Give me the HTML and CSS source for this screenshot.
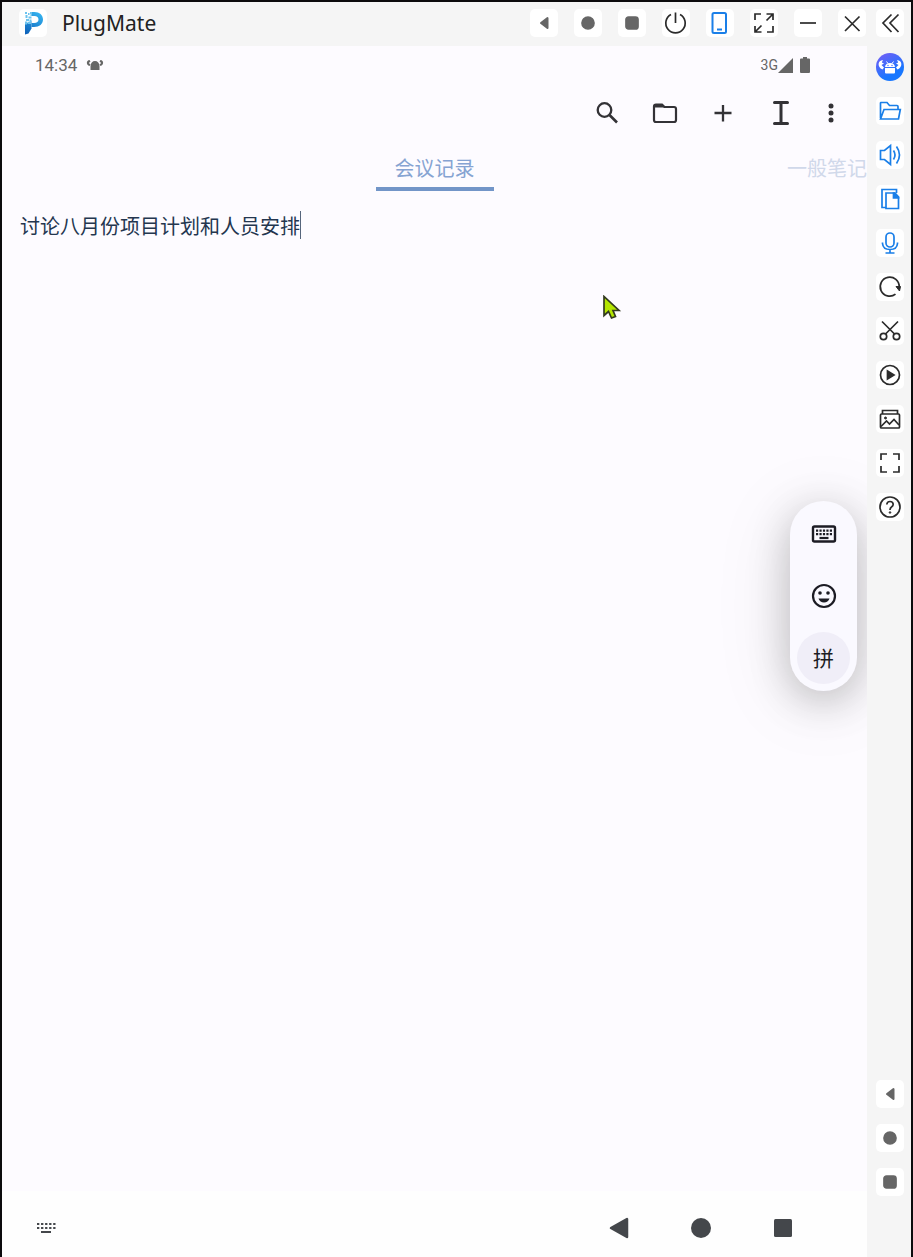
FILE: index.html
```html
<!DOCTYPE html>
<html lang="zh-CN">
<head>
    <meta charset="UTF-8">
    <meta name="viewport" content="width=device-width, initial-scale=1.0">
    <title>PlugMate</title>
    <link rel="stylesheet" href="styles.css">
</head>
<body>

    <!-- Shapes used more than once -->
    <svg class="sprites" aria-hidden="true">
        <symbol id="back" viewBox="0 0 28 28"><path d="M11 14L17.500 9V19Z" fill="currentColor" stroke="currentColor" stroke-width="2" stroke-linejoin="round"/></symbol>
        <symbol id="home" viewBox="0 0 28 28"><circle cx="14" cy="14" r="6" fill="currentColor"/></symbol>
        <symbol id="recent" viewBox="0 0 28 28"><rect x="8" y="8" width="12" height="12" rx="2.5" fill="currentColor"/></symbol>
    </svg>

    <div class="window">
        <header class="titlebar">
            <svg class="logo" viewBox="0 0 28 28" aria-hidden="true">
                <defs>
                    <linearGradient id="logo-fill" gradientUnits="userSpaceOnUse" x1="20" y1="3" x2="6" y2="25">
                        <stop offset="0" stop-color="#35b4f0"/>
                        <stop offset="1" stop-color="#0c5fb8"/>
                    </linearGradient>
                </defs>
                <rect width="28" height="28" rx="5" fill="#fff"/>
                <path d="M6 15L12.500 12V19.500L9.500 24.500L6 25.500Z" fill="url(#logo-fill)"/>
                <path d="M13 3H15.500C20.500 3 24 6 24 10.500C24 15 20.500 18 15 18H12.500V14H15C18 14 19.500 12.800 19.500 10.500C19.500 8.200 18 7 15.500 7H13Z" fill="url(#logo-fill)"/>
                <path d="M6 3H8V5H6ZM9 4H10.500V6H9ZM11 3H13V7H11.500V5H11ZM6.500 6H8.500V9H6.500ZM9.500 7.500H12.500V9.500H9.500ZM7 10H10V12H7ZM10.500 10.500H12.500V12.500H10.500ZM6 12.500H8V15.500H6ZM8.500 12.800H12V15H8.500Z" fill="#6cc3ee"/>
            </svg>
            <h1 class="app-name">PlugMate</h1>
            <div class="window-actions">
                <button class="tile nav-key" type="button" aria-label="Back"><svg><use href="#back"/></svg></button>
                <button class="tile nav-key" type="button" aria-label="Home"><svg><use href="#home"/></svg></button>
                <button class="tile nav-key" type="button" aria-label="Recent apps"><svg><use href="#recent"/></svg></button>
                <button class="tile" type="button" aria-label="Power">
                    <svg viewBox="0 0 28 28"><path d="M9 5.500A9.700 9.700 0 1 0 18 5.500M13.500 3.500V14"/></svg>
                </button>
                <button class="tile blue" type="button" aria-label="Phone mode">
                    <svg viewBox="0 0 28 28"><rect x="6.500" y="4" width="13.500" height="20" rx="1.500" stroke-width="2"/><path d="M11 20.500H16" stroke-width="2"/></svg>
                </button>
                <button class="tile" type="button" aria-label="Full screen">
                    <svg viewBox="0 0 28 28"><path d="M5 11V5H11M16.500 5H23V11M23 5L16.500 11.500M23 17V23H17M11.500 23H5V17M5 23L11.500 16.500"/></svg>
                </button>
                <button class="tile" type="button" aria-label="Minimize">
                    <svg viewBox="0 0 28 28"><path d="M6 14H22"/></svg>
                </button>
                <button class="tile" type="button" aria-label="Close">
                    <svg viewBox="0 0 28 28"><path d="M7 7.500L21.500 22M21.500 7.500L7 22"/></svg>
                </button>
            </div>
            <button class="tile" type="button" aria-label="Collapse sidebar">
                <svg viewBox="0 0 28 28"><path d="M15.500 5.500L7 14L15.500 23M22.500 5.500L14 14L22.500 23"/></svg>
            </button>
        </header>

        <main class="screen">
            <div class="status">
                <span class="clock">14:34</span>
                <svg class="crab" viewBox="0 0 18 12" aria-hidden="true">
                    <path d="M4.500 7C4.500 4 6.500 2 9 2S13.500 4 13.500 7V11H4.500Z"/>
                    <path d="M3.500 1C0 1.500 0 6 3.500 7L4.500 5.500L2.800 4L4.500 2.500ZM14.500 1C18 1.500 18 6 14.500 7L13.500 5.500L15.200 4L13.500 2.500Z"/>
                </svg>
                <span class="network">3G</span>
                <svg class="signal" viewBox="0 0 15 15" aria-hidden="true"><path d="M15 0V15H0Z"/></svg>
                <svg class="battery" viewBox="0 0 10 16" aria-hidden="true"><path d="M3 0H7V1.500H9Q10 1.500 10 2.500V15Q10 16 9 16H1Q0 16 0 15V2.500Q0 1.500 1 1.500H3Z"/></svg>
            </div>

            <div class="toolbar">
                <button type="button" aria-label="Search">
                    <svg viewBox="0 0 28 28"><circle cx="11.500" cy="11" r="6.800" stroke-width="2.300"/><path d="M16.500 16L24 23.500" stroke-width="2.600"/></svg>
                </button>
                <button type="button" aria-label="Folders">
                    <svg viewBox="0 0 28 28"><path d="M3 7.500Q3 5.500 5 5.500H11L13.500 8H23Q25 8 25 10V21Q25 23 23 23H5Q3 23 3 21Z" stroke-width="2.200"/><path d="M3 5H11.500L14 8.500H3Z" fill="currentColor" stroke="none"/></svg>
                </button>
                <button type="button" aria-label="Add note">
                    <svg viewBox="0 0 28 28"><path d="M14 6V22.500M5.500 14H22.500" stroke-width="2.300"/></svg>
                </button>
                <button type="button" aria-label="Text cursor">
                    <svg viewBox="0 0 28 28"><path d="M7.500 3.500H20.500M14 3.500V24.500M7.500 24.500H20.500" stroke-width="3" stroke-linecap="round"/></svg>
                </button>
                <button class="more" type="button" aria-label="More options">
                    <svg viewBox="0 0 28 28"><g fill="currentColor" stroke="none"><circle cx="14" cy="7" r="2.500"/><circle cx="14" cy="14" r="2.500"/><circle cx="14" cy="21" r="2.500"/></g></svg>
                </button>
            </div>

            <div class="tabs" role="tablist">
                <button class="tab active" type="button" role="tab" aria-selected="true">会议记录</button>
                <button class="tab next" type="button" role="tab" aria-selected="false">一般笔记</button>
            </div>

            <div class="editor">
                <textarea class="note" rows="1" cols="14" aria-label="会议记录" spellcheck="false">讨论八月份项目计划和人员安排</textarea>
                <span class="caret"></span>
            </div>

            <!-- Floating input method picker -->
            <div class="ime">
                <button type="button" aria-label="Keyboard">
                    <svg viewBox="0 0 28 28">
                        <rect x="3" y="6.500" width="22" height="15" rx="1.500" stroke-width="2.400"/>
                        <path d="M6 10.700H22M6 14.200H22" stroke-width="2.200" stroke-dasharray="2.200 1.250"/>
                        <path d="M9.500 18H18.500" stroke-width="2.200"/>
                    </svg>
                </button>
                <button type="button" aria-label="Emoji">
                    <svg viewBox="0 0 28 28">
                        <circle cx="14" cy="14" r="11" stroke-width="2.200"/>
                        <g fill="currentColor" stroke="none"><circle cx="10" cy="11" r="1.800"/><circle cx="18" cy="11" r="1.800"/><path d="M8.500 16.500H19.500Q18 20.500 14 20.500T8.500 16.500Z"/></g>
                    </svg>
                </button>
                <button class="selected" type="button">拼</button>
            </div>

            <svg class="pointer" viewBox="0 0 20 26" aria-hidden="true"><path d="M2 1.500V20.500L6.500 16.500L9.500 23L13.500 21.500L11 15.500H17Z"/></svg>

            <nav class="navbar">
                <button type="button" aria-label="Show keyboard">
                    <svg viewBox="0 0 28 28"><path d="M5 10H23.500M5 14H23.500" stroke-width="2.200" stroke-dasharray="2.300 1.750"/><path d="M9 18H19" stroke-width="2"/></svg>
                </button>
                <div class="nav-keys">
                    <button type="button" aria-label="Back"><svg viewBox="0 0 28 28"><path d="M6 14L22 5V23Z" fill="currentColor" stroke-width="2.500" stroke-linejoin="round"/></svg></button>
                    <button type="button" aria-label="Home"><svg viewBox="0 0 28 28"><circle cx="14" cy="14" r="10" fill="currentColor" stroke="none"/></svg></button>
                    <button type="button" aria-label="Recent apps"><svg viewBox="0 0 28 28"><rect x="5" y="5" width="18" height="18" rx="1.500" fill="currentColor" stroke="none"/></svg></button>
                </div>
            </nav>
        </main>

        <aside class="rail">
            <button class="tile avatar" type="button" aria-label="Assistant">
                <svg viewBox="0 0 28 28">
                    <g fill="#fff" stroke="none">
                        <path d="M9 14Q9.500 10 14 10T19 14ZM9 15H19V19.500Q19 20.500 18 20.500H10Q9 20.500 9 19.500Z"/>
                        <path d="M7 7C1.500 7.500 1 14 6.500 16.500L8 14.500L5.500 12L8 10.500L5.800 9.500ZM21 7C26.500 7.500 27 14 21.500 16.500L20 14.500L22.500 12L20 10.500L22.200 9.500Z"/>
                    </g>
                    <path d="M10.500 8.500L12 10.500M17.500 8.500L16 10.500" stroke="#fff" stroke-width="1"/>
                    <g fill="#4a6bff" stroke="none"><circle cx="12" cy="12.500" r=".7"/><circle cx="16" cy="12.500" r=".7"/></g>
                </svg>
            </button>
            <button class="tile blue" type="button" aria-label="Files">
                <svg viewBox="0 0 28 28"><path d="M4.500 21V6Q4.500 5.500 5 5.500H11L13.500 8.500H21Q22 8.500 22 9.500V12M4.500 22L8 12.500H24.300L22.500 22Z"/></svg>
            </button>
            <button class="tile blue" type="button" aria-label="Volume">
                <svg viewBox="0 0 28 28"><path d="M4.500 9.500H8.500L14.500 4.500V23.500L8.500 18.500H4.500ZM17.500 9.500Q20.500 14 17.500 18.500M20.500 5.500Q26.500 14 20.500 22.500"/></svg>
            </button>
            <button class="tile blue" type="button" aria-label="Copy">
                <svg viewBox="0 0 28 28"><path d="M9.500 22.500H6V4.500H20.500V8M10 8H18.500L22.500 12V23.500H10Z"/><path d="M17.500 8H19L22.500 12V13H17.500Z" fill="currentColor"/></svg>
            </button>
            <button class="tile blue" type="button" aria-label="Microphone">
                <svg viewBox="0 0 28 28"><rect x="10" y="4" width="8" height="14" rx="4"/><path d="M6.500 13.500V14.500Q7 20.500 14 20.500T21.500 14.500V13.500M14 20.500V24M9.500 24H18.500"/></svg>
            </button>
            <button class="tile" type="button" aria-label="Rotate">
                <svg viewBox="0 0 28 28"><path d="M19.500 21.200A9.500 9.500 0 1 1 23.200 14"/><path d="M20 13.500H24.500L23.500 18Z" fill="currentColor" stroke-width="1"/></svg>
            </button>
            <button class="tile" type="button" aria-label="Cut">
                <svg viewBox="0 0 28 28"><circle cx="7.500" cy="19.500" r="3.200"/><circle cx="20.500" cy="19.500" r="3.200"/><path d="M9.500 17L22 4.500M18.500 17L6 4.500"/></svg>
            </button>
            <button class="tile" type="button" aria-label="Record">
                <svg viewBox="0 0 28 28"><circle cx="14" cy="14" r="9.500"/><path d="M11.500 10L18 14L11.500 18Z" fill="currentColor"/></svg>
            </button>
            <button class="tile" type="button" aria-label="Gallery">
                <svg viewBox="0 0 28 28"><rect x="4.500" y="9" width="19" height="14" rx="1"/><path d="M6.500 9V5.500H21.500V9M5 21.500L10.500 16L13.500 19L18 14.500L23 20"/><circle cx="9.500" cy="13" r="1" fill="currentColor" stroke-width="1"/></svg>
            </button>
            <button class="tile" type="button" aria-label="Screenshot">
                <svg viewBox="0 0 28 28"><path d="M5 11V5H11M17 5H23V11M23 17V23H17M11 23H5V17"/></svg>
            </button>
            <button class="tile" type="button" aria-label="Help">
                <svg viewBox="0 0 28 28"><circle cx="14" cy="14" r="10"/><path d="M10.800 11.500Q11 8.500 14 8.500T17.200 11.300Q17.200 13 15.500 14Q14 15 14 17"/><circle cx="14" cy="19.500" r=".8" fill="currentColor" stroke-width="1"/></svg>
            </button>
            <div class="rail-keys">
                <button class="tile nav-key" type="button" aria-label="Back"><svg><use href="#back"/></svg></button>
                <button class="tile nav-key" type="button" aria-label="Home"><svg><use href="#home"/></svg></button>
                <button class="tile nav-key" type="button" aria-label="Recent apps"><svg><use href="#recent"/></svg></button>
            </div>
        </aside>
    </div>

</body>
</html>
```
FILE: styles.css
```css
* {
    box-sizing: border-box;
}

body {
    margin: 0;
    font-family: Roboto, "Noto Sans CJK SC", sans-serif;
    background-color: #fdfbff;
}

button {
    display: flex;
    align-items: center;
    justify-content: center;
    padding: 0;
    border: none;
    background: none;
    color: inherit;
    font: inherit;
}

button svg {
    width: 28px;
    height: 28px;
    fill: none;
    stroke: currentColor;
    stroke-width: 2;
}

.sprites {
    display: none;
}

.window {
    display: grid;
    grid-template-columns: 1fr 44px;
    grid-template-rows: 44px 1fr;
    min-height: 100vh;
    border: 2px solid #0c0b0d;
    border-bottom: none;
    background-color: #f5f5f5;
}

/* Title bar */
.titlebar {
    grid-column: 1 / -1;
    display: flex;
    align-items: center;
    gap: 10px;
    padding: 0 7px 2px 17px;
}

.logo {
    width: 28px;
    height: 28px;
}

.app-name {
    flex: 1;
    margin: 0 0 0 5px;
    font-family: "Noto Sans", sans-serif;
    font-size: 21px;
    font-weight: 400;
    line-height: 28px;
    color: #222;
}

.window-actions {
    display: flex;
    gap: 16px;
}

.tile {
    width: 28px;
    height: 28px;
    border-radius: 5px;
    background-color: #fff;
    color: #2b2b2b;
}

.tile svg {
    stroke-width: 1.7;
}

.tile.blue {
    color: #1a7fe8;
}

.tile.nav-key {
    color: #666;
}

/* Phone screen */
.screen {
    position: relative;
    display: flex;
    flex-direction: column;
    overflow: hidden;
    background-color: #fdfbff;
}

.status {
    display: flex;
    align-items: center;
    height: 38px;
    padding: 0 57px 0 33px;
    color: #666;
    fill: #666;
}

.clock {
    font-size: 17px;
}

.crab {
    width: 18px;
    height: 12px;
    margin-left: 9px;
}

.network {
    margin-left: auto;
    font-size: 14px;
}

.signal {
    width: 15px;
    height: 15px;
}

.battery {
    width: 10px;
    height: 16px;
    margin-left: 7px;
}

.toolbar {
    display: flex;
    justify-content: flex-end;
    gap: 18px;
    padding: 9px 16px;
    color: #333236;
}

.toolbar button {
    width: 40px;
    height: 40px;
}

.toolbar .more {
    margin-left: -8px;
}

.tabs {
    display: grid;
    grid-template-columns: 1fr auto 1fr;
    margin-top: 9px;
    font-size: 20px;
    line-height: 28px;
}

.tab {
    height: 40px;
    border-bottom: 4px solid transparent;
}

.tab.active {
    grid-column: 2;
    padding: 0 19px;
    border-color: #7295c8;
    color: #86a3d2;
}

.tab.next {
    justify-self: end;
    color: #d0d8ea;
}

.editor {
    flex: 1;
    display: flex;
    align-items: flex-start;
    padding: 20px 18px;
}

.note {
    field-sizing: content;
    height: 32px;
    padding: 2px 0 0;
    border: none;
    outline: none;
    resize: none;
    overflow: hidden;
    background: none;
    color: #24364f;
    font: inherit;
    font-size: 20px;
    line-height: 28px;
}

.caret {
    width: 1px;
    height: 28px;
    background-color: #56657c;
}

/* Input method picker */
.ime {
    position: absolute;
    top: 455px;
    right: 10px;
    display: flex;
    flex-direction: column;
    gap: 10px;
    padding: 7px;
    border-radius: 34px;
    background-color: #faf9ff;
    box-shadow: 0 10px 40px rgba(0, 0, 0, 0.22), 0 10px 80px rgba(0, 0, 0, 0.1);
    color: #1c1c24;
}

.ime button {
    width: 53px;
    height: 52px;
    border-radius: 50%;
    font-size: 21px;
}

.ime .selected {
    padding-bottom: 2px;
    background-color: #f0eef8;
}

.pointer {
    position: absolute;
    top: 249px;
    left: 600px;
    width: 20px;
    height: 26px;
    fill: #b4e600;
    stroke: #333a20;
    stroke-width: 1.7;
}

.navbar {
    display: flex;
    align-items: center;
    justify-content: space-between;
    height: 66px;
    padding: 8px 70px 0 30px;
    background-color: #fefefe;
    color: #44474b;
}

.nav-keys {
    display: flex;
    gap: 54px;
}

/* Side rail */
.rail {
    display: flex;
    flex-direction: column;
    align-items: center;
    gap: 16px;
    padding: 7px 0 61px 2px;
}

.avatar {
    border-radius: 50%;
    background: linear-gradient(150deg, #7a5cf5, #1877ff 70%);
}

.rail-keys {
    display: flex;
    flex-direction: column;
    gap: 16px;
    margin-top: auto;
}
```
